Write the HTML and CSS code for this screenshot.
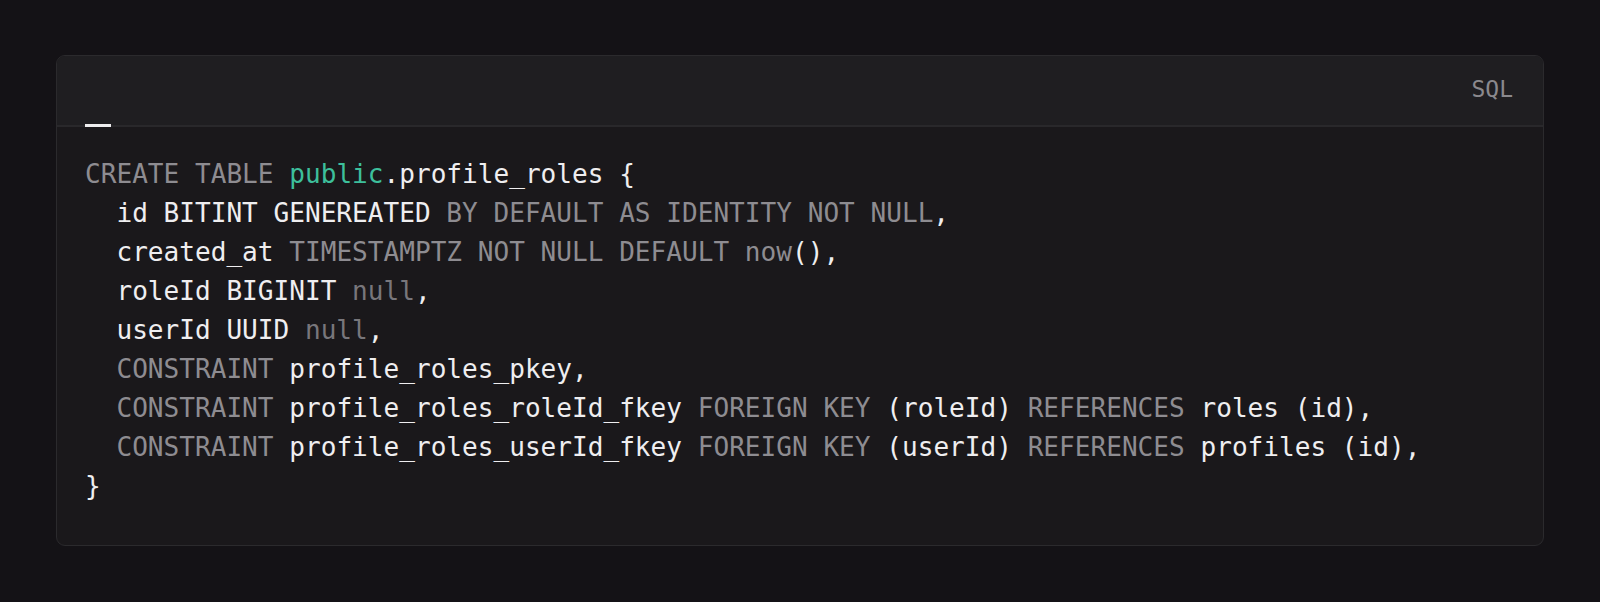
FILE: index.html
```html
<!DOCTYPE html>
<html lang="en">
<head>
<meta charset="utf-8">
<title>SQL code block</title>
<link rel="stylesheet" href="styles.css">
</head>
<body>
<div class="page">
  <div class="card">
    <div class="card-header">
      <span class="tab-indicator"></span>
      <span class="lang">SQL</span>
    </div>
    <pre class="code"><span class="kw">CREATE TABLE</span> <span class="ns">public</span><span class="id">.profile_roles {</span>
  <span class="id">id BITINT GENEREATED</span> <span class="kw">BY DEFAULT AS IDENTITY NOT NULL</span><span class="id">,</span>
  <span class="id">created_at</span> <span class="kw">TIMESTAMPTZ NOT NULL DEFAULT</span> <span class="kw">now</span><span class="id">(),</span>
  <span class="id">roleId BIGINIT</span> <span class="nl">null</span><span class="id">,</span>
  <span class="id">userId UUID</span> <span class="nl">null</span><span class="id">,</span>
  <span class="kw">CONSTRAINT</span> <span class="id">profile_roles_pkey,</span>
  <span class="kw">CONSTRAINT</span> <span class="id">profile_roles_roleId_fkey</span> <span class="kw">FOREIGN KEY</span> <span class="id">(roleId)</span> <span class="kw">REFERENCES</span> <span class="id">roles (id),</span>
  <span class="kw">CONSTRAINT</span> <span class="id">profile_roles_userId_fkey</span> <span class="kw">FOREIGN KEY</span> <span class="id">(userId)</span> <span class="kw">REFERENCES</span> <span class="id">profiles (id),</span>
<span class="id">}</span></pre>
  </div>
</div>
</body>
</html>
```

FILE: styles.css
```css
html, body {
  margin: 0;
  padding: 0;
  background: #141216;
}

.page {
  padding: 55px 56px 0 56px;
}

.card {
  background: #1a181b;
  border: 1px solid #2b2a2d;
  border-radius: 9px;
  overflow: hidden;
}

.card-header {
  position: relative;
  background: #1f1e21;
  border-bottom: 2px solid #29282b;
  display: flex;
  align-items: center;
  justify-content: flex-end;
  padding: 0 30px 0 28px;
  box-sizing: border-box;
  height: 71px;
}

.lang {
  font-family: "DejaVu Sans Mono", "Liberation Mono", monospace;
  font-size: 23px;
  color: #8b898d;
  margin-top: -4px;
}

.tab-indicator {
  position: absolute;
  left: 28px;
  bottom: -2px;
  width: 26px;
  height: 3px;
  background: #eeedef;
}

.code {
  margin: 0;
  padding: 28px 27px 39px 28px;
  font-family: "DejaVu Sans Mono", "Liberation Mono", monospace;
  font-size: 26.1px;
  line-height: 39px;
  color: #efeef0;
  white-space: pre;
}

.kw { color: #8e8c91; }
.ns { color: #3dbf9b; }
.id { color: #efeef0; }
.nl { color: #78767b; }
```
